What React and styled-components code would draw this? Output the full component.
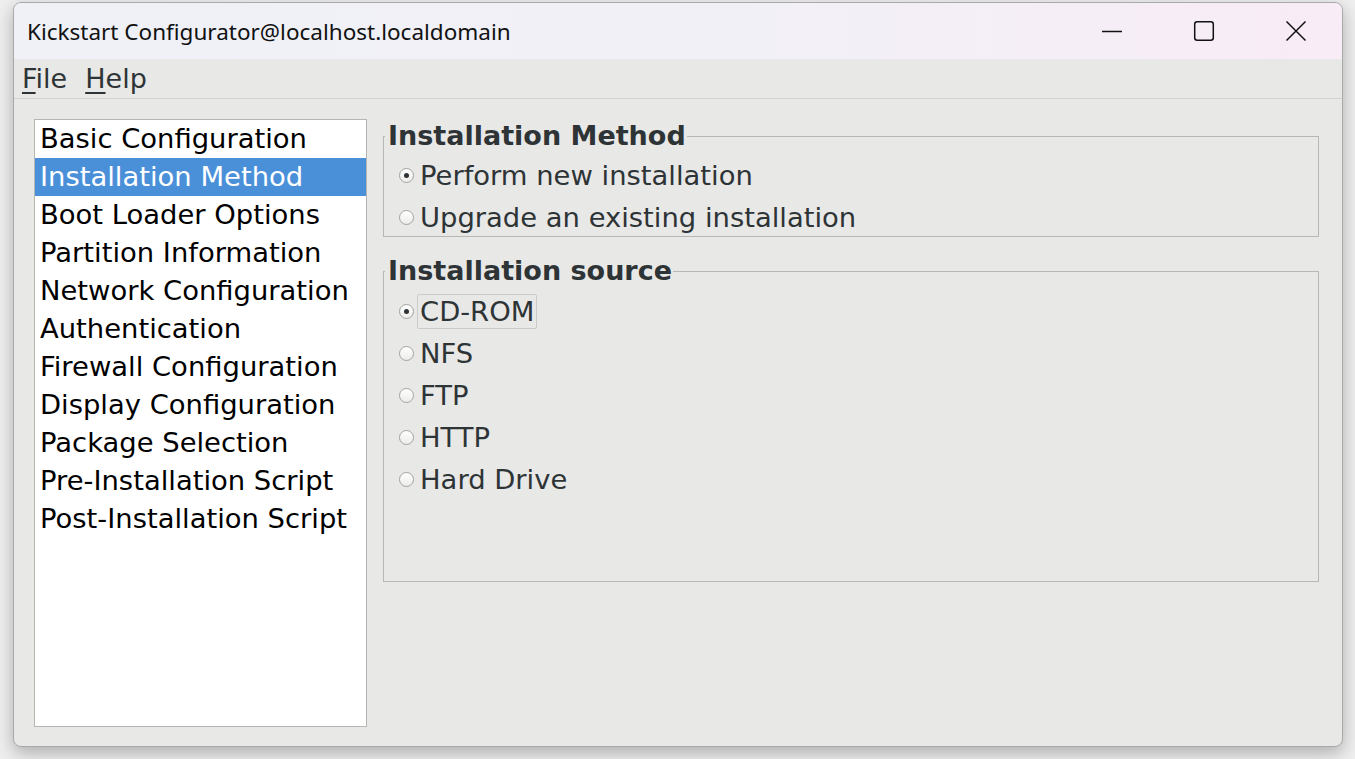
import React from "react";
import styled, { createGlobalStyle } from "styled-components";

const Global = createGlobalStyle`
  html, body { margin: 0; padding: 0; }
  body {
    background: #efefef;
    width: 1355px;
    height: 759px;
    overflow: hidden;
    font-family: "DejaVu Sans", sans-serif;
  }
  #root { padding: 2px 12px 0 13px; }
`;

const Window = styled.div`
  width: 1330px;
  height: 745px;
  box-sizing: border-box;
  border: 1px solid #a9a9a9;
  border-radius: 8px;
  overflow: hidden;
  display: flex;
  flex-direction: column;
  background: #e8e8e7;
  box-shadow: 0 6px 18px rgba(0, 0, 0, 0.28);
`;

const TitleBar = styled.div`
  height: 56px;
  flex: none;
  display: flex;
  align-items: center;
  background: linear-gradient(90deg, #eff1f7 0%, #f2f0f7 55%, #f8ecf6 100%);
`;

const Title = styled.div`
  flex: 1;
  padding-left: 13px;
  font-family: "Noto Sans", "Open Sans", sans-serif;
  font-size: 22.5px;
  color: #111;
`;

const CaptionButton = styled.div`
  width: 92px;
  height: 56px;
  display: flex;
  align-items: center;
  justify-content: center;
`;

const MenuBar = styled.div`
  height: 39px;
  flex: none;
  display: flex;
  align-items: center;
  gap: 18px;
  padding-left: 8px;
  border-bottom: 1px solid #d2d2d0;
  font-size: 27px;
  color: #2e3436;
`;

const MenuItem = styled.span`
  line-height: 1;
  u { text-decoration-thickness: 1.5px; text-underline-offset: 4px; }
`;

const Body = styled.div`
  flex: 1;
  display: flex;
  gap: 16px;
  padding: 20px 23px 19px 20px;
  min-height: 0;
`;

const List = styled.div`
  width: 331px;
  flex: none;
  background: #fff;
  border: 1px solid #b6b6b2;
  display: flex;
  flex-direction: column;
`;

const ListItem = styled.div`
  height: 38px;
  display: flex;
  align-items: center;
  padding-left: 5px;
  padding-bottom: 1px;
  box-sizing: border-box;
  font-size: 27.4px;
  white-space: nowrap;
  color: ${(p) => (p.$selected ? "#ffffff" : "#000000")};
  background: ${(p) => (p.$selected ? "#4a90d9" : "transparent")};
`;

const Panel = styled.div`
  flex: 1;
  display: flex;
  flex-direction: column;
  gap: 18px;
  padding-top: 1px;
`;

const Frame = styled.fieldset`
  margin: 0;
  padding: ${(p) => p.$padTop}px 0 ${(p) => p.$padBottom}px 15px;
  border: 1px solid #b7b7b4;
  min-width: 0;
  display: flex;
  flex-direction: column;
  gap: 4px;
`;

const Legend = styled.legend`
  padding: 0 1px 0 3px;
  margin-left: -14px;
  font-size: 27px;
  font-weight: bold;
  line-height: 32px;
  color: #2e3436;
`;

const RadioRow = styled.div`
  height: 38px;
  display: flex;
  align-items: center;
  gap: 3px;
`;

const RadioCircle = styled.span`
  width: 13px;
  height: 13px;
  border-radius: 50%;
  border: 1px solid #a3a3a0;
  background: linear-gradient(180deg, #ffffff 0%, #ececea 100%);
  display: flex;
  align-items: center;
  justify-content: center;
  flex: none;
  &::after {
    content: "";
    width: 5px;
    height: 5px;
    border-radius: 50%;
    background: ${(p) => (p.$checked ? "#2e3436" : "transparent")};
  }
`;

const RadioLabel = styled.span`
  font-size: 27.4px;
  color: #2e3436;
  line-height: 33px;
  padding: 0 2px;
  border: 1px solid ${(p) => (p.$focused ? "#cbcbc8" : "transparent")};
  border-radius: 2px;
  white-space: nowrap;
`;

const Radio = ({ checked, focused, children }) => (
  <RadioRow>
    <RadioCircle $checked={checked} />
    <RadioLabel $focused={focused}>{children}</RadioLabel>
  </RadioRow>
);

const items = [
  "Basic Configuration",
  "Installation Method",
  "Boot Loader Options",
  "Partition Information",
  "Network Configuration",
  "Authentication",
  "Firewall Configuration",
  "Display Configuration",
  "Package Selection",
  "Pre-Installation Script",
  "Post-Installation Script",
];

export default function App() {
  return (
    <>
      <Global />
      <Window>
        <TitleBar>
          <Title>Kickstart Configurator@localhost.localdomain</Title>
          <CaptionButton>
            <svg width="22" height="22" viewBox="0 0 22 22">
              <path d="M1 11.5h20" stroke="#111" strokeWidth="1.4" fill="none" />
            </svg>
          </CaptionButton>
          <CaptionButton>
            <svg width="22" height="22" viewBox="0 0 22 22">
              <rect x="1.7" y="1.7" width="18.6" height="18.6" rx="2.5" stroke="#111" strokeWidth="1.5" fill="none" />
            </svg>
          </CaptionButton>
          <CaptionButton>
            <svg width="22" height="22" viewBox="0 0 22 22">
              <path d="M1.5 1.5l19 19M20.5 1.5l-19 19" stroke="#111" strokeWidth="1.5" fill="none" />
            </svg>
          </CaptionButton>
        </TitleBar>
        <MenuBar>
          <MenuItem><u>F</u>ile</MenuItem>
          <MenuItem><u>H</u>elp</MenuItem>
        </MenuBar>
        <Body>
          <List>
            {items.map((t) => (
              <ListItem key={t} $selected={t === "Installation Method"}>{t}</ListItem>
            ))}
          </List>
          <Panel>
            <Frame $padTop={4} $padBottom={0}>
              <Legend>Installation Method</Legend>
              <Radio checked>Perform new installation</Radio>
              <Radio>Upgrade an existing installation</Radio>
            </Frame>
            <Frame $padTop={5} $padBottom={83}>
              <Legend>Installation source</Legend>
              <Radio checked focused>CD-ROM</Radio>
              <Radio>NFS</Radio>
              <Radio>FTP</Radio>
              <Radio>HTTP</Radio>
              <Radio>Hard Drive</Radio>
            </Frame>
          </Panel>
        </Body>
      </Window>
    </>
  );
}
